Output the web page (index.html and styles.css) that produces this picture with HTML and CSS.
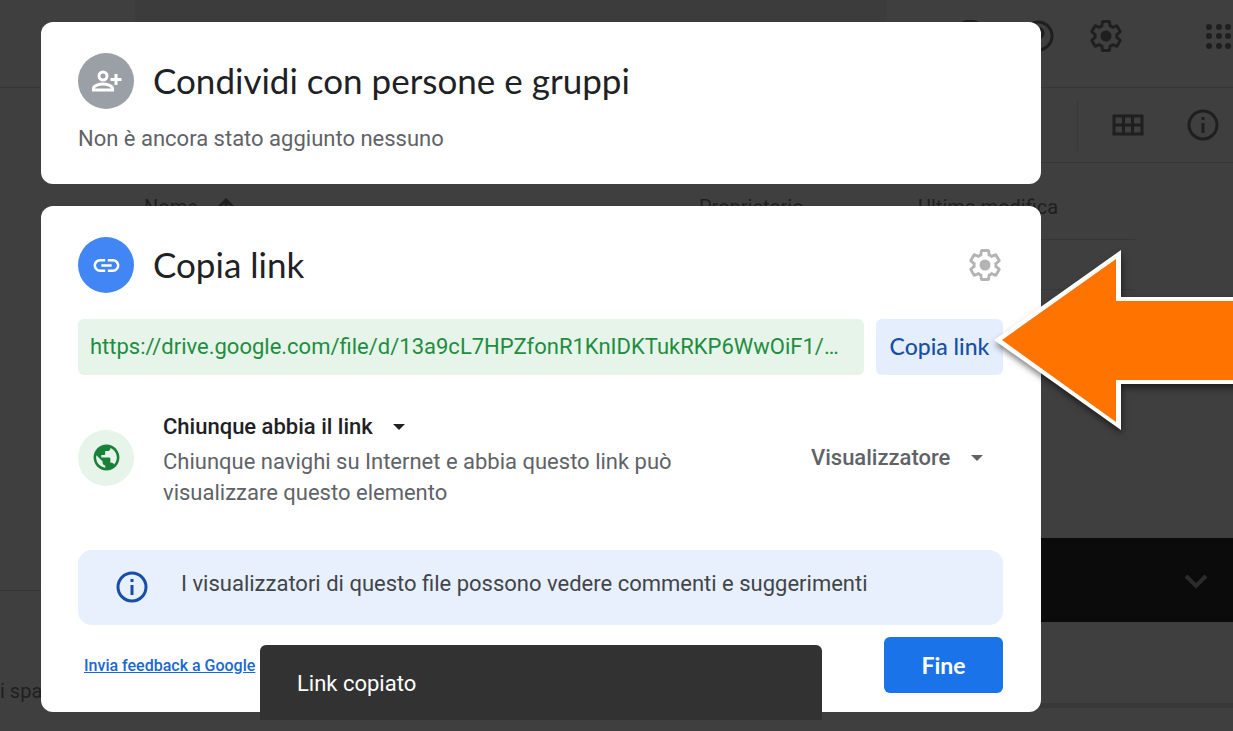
FILE: index.html
```html
<!DOCTYPE html>
<html lang="it">
<head>
    <meta charset="UTF-8">
    <meta name="viewport" content="width=device-width, initial-scale=1">
    <title>Condividi con persone e gruppi</title>
    <link rel="stylesheet" href="styles.css">
</head>
<body>

    <!-- Drive page, dimmed behind the dialog -->
    <div class="drive">
        <header class="topbar">
            <div class="search-box"></div>
            <div class="topbar-icons">
                <svg class="icon" viewBox="0 0 32 32"><circle cx="16" cy="16" r="15" fill="none" stroke="currentColor" stroke-width="3"/></svg>
                <svg class="icon" viewBox="0 0 32 32"><circle cx="16" cy="16" r="14" fill="none" stroke="currentColor" stroke-width="3"/><path d="M11 13a5 5 0 1 1 8 4c-2 1.500-3 2-3 4" fill="none" stroke="currentColor" stroke-width="3"/></svg>
                <svg class="icon" viewBox="1 1 22 22"><use href="#gear"/></svg>
            </div>
            <svg class="icon apps" viewBox="0 0 32 32">
                <g fill="currentColor">
                    <circle cx="6" cy="7" r="3"/><circle cx="16" cy="7" r="3"/><circle cx="25" cy="7" r="3"/>
                    <circle cx="6" cy="16" r="3"/><circle cx="16" cy="16" r="3"/><circle cx="25" cy="16" r="3"/>
                    <circle cx="6" cy="26" r="3"/><circle cx="16" cy="26" r="3"/><circle cx="25" cy="26" r="3"/>
                </g>
            </svg>
        </header>
        <div class="drive-body">
            <aside class="sidebar">
                <p class="storage">i spazio</p>
            </aside>
            <main class="files">
                <div class="toolbar">
                    <span class="divider"></span>
                    <svg class="icon" viewBox="0 0 32 32"><path d="M2 7h28v18H2zM2 16h28M11.500 7v18M20.500 7v18" fill="none" stroke="currentColor" stroke-width="3"/></svg>
                    <svg class="icon" viewBox="0 0 32 32"><use href="#info"/></svg>
                </div>
                <div class="columns">
                    <span class="sort">Nome
                        <svg width="20" height="20" viewBox="0 0 20 20"><path d="M10 20V3M2 11l8-8 8 8" fill="none" stroke="currentColor" stroke-width="3"/></svg>
                    </span>
                    <span>Proprietario</span>
                    <span>Ultima modifica</span>
                </div>
                <div class="file-row"></div>
            </main>
        </div>
        <div class="upload-panel">
            <div class="upload-head">
                <svg width="24" height="16" viewBox="0 0 24 16"><path d="M2 3l10 10L22 3" fill="none" stroke="currentColor" stroke-width="4"/></svg>
            </div>
            <div class="upload-list"></div>
        </div>
    </div>

    <div class="overlay">
        <section class="card">
            <div class="card-header">
                <span class="badge badge-gray">
                    <svg width="56" height="56" viewBox="0 0 56 56" fill="none" stroke="#fff" stroke-width="3">
                        <circle cx="25" cy="23" r="4"/>
                        <path d="M15.500 37v-1.500c0-3 6-4.500 9.500-4.500s9.500 1.500 9.500 4.500V37z"/>
                        <path d="M38 21v11M32.500 26.500h11"/>
                    </svg>
                </span>
                <h1>Condividi con persone e gruppi</h1>
            </div>
            <p class="empty">Non è ancora stato aggiunto nessuno</p>
        </section>

        <section class="card">
            <div class="card-header">
                <span class="badge badge-blue">
                    <svg width="31" height="31" viewBox="0 0 24 24" fill="#fff"><path d="M3.900 12c0-1.710 1.390-3.100 3.100-3.100h4V7H7c-2.760 0-5 2.240-5 5s2.240 5 5 5h4v-1.900H7c-1.710 0-3.100-1.390-3.100-3.100zM8 13h8v-2H8v2zm9-6h-4v1.900h4c1.710 0 3.100 1.390 3.100 3.100s-1.390 3.100-3.100 3.100h-4V17h4c2.760 0 5-2.240 5-5s-2.240-5-5-5z"/></svg>
                </span>
                <h2>Copia link</h2>
                <button class="settings-btn" type="button" aria-label="Impostazioni">
                    <svg class="icon" viewBox="1 1 22 22"><use href="#gear"/></svg>
                </button>
            </div>

            <div class="link-row">
                <input class="link-input" type="text" aria-label="Link" readonly value="https://drive.google.com/file/d/13a9cL7HPZfonR1KnIDKTukRKP6WwOiF1/…">
                <button class="copy-btn" type="button">Copia link</button>
            </div>

            <div class="access">
                <span class="badge badge-green">
                    <svg width="31" height="31" viewBox="0 0 24 24" fill="#188038"><path d="M12 2C6.480 2 2 6.480 2 12s4.480 10 10 10 10-4.480 10-10S17.520 2 12 2zm-1 17.930c-3.950-.49-7-3.850-7-7.930 0-.62.080-1.210.21-1.790L9 15v1c0 1.100.9 2 2 2v1.930zm6.900-2.540c-.26-.81-1-1.390-1.900-1.390h-1v-3c0-.55-.45-1-1-1H8v-2h2c.55 0 1-.45 1-1V7h2c1.100 0 2-.9 2-2v-.41c2.930 1.190 5 4.060 5 7.410 0 2.080-.8 3.970-2.100 5.390z"/></svg>
                </span>
                <div class="access-text">
                    <div class="picker">
                        <select aria-label="Accesso generale">
                            <option>Chiunque abbia il link</option>
                        </select>
                        <svg width="12" height="6" viewBox="0 0 12 6"><path d="M0 0h12L6 6z" fill="currentColor"/></svg>
                    </div>
                    <p>Chiunque navighi su Internet e abbia questo link può visualizzare questo elemento</p>
                </div>
                <div class="picker role">
                    <select aria-label="Ruolo">
                        <option>Visualizzatore</option>
                    </select>
                    <svg width="12" height="6" viewBox="0 0 12 6"><path d="M0 0h12L6 6z" fill="currentColor"/></svg>
                </div>
            </div>

            <div class="notice">
                <svg class="icon" viewBox="0 0 32 32"><use href="#info"/></svg>
                <p>I visualizzatori di questo file possono vedere commenti e suggerimenti</p>
            </div>

            <div class="card-footer">
                <a href="#">Invia feedback a Google</a>
                <button class="done-btn" type="button">Fine</button>
            </div>
        </section>
    </div>

    <div class="toast" role="status">Link copiato</div>

    <svg class="arrow" viewBox="0 0 239 180">
        <path d="M0 90L127 0v47h130v87H127v46z" fill="#fff"/>
        <path d="M8 90L122 9v42h130v79H122v42z" fill="#ff7300"/>
    </svg>

    <!-- shared icons -->
    <svg class="defs">
        <symbol id="gear" overflow="visible">
            <path fill="none" stroke="currentColor" stroke-width="2" d="M19.430 12.980c.04-.32.07-.64.07-.98s-.03-.66-.07-.98l2.110-1.650c.19-.15.24-.42.12-.64l-2-3.460c-.12-.22-.39-.3-.61-.22l-2.490 1c-.52-.4-1.080-.73-1.690-.98l-.38-2.650C14.460 2.180 14.250 2 14 2h-4c-.25 0-.46.18-.49.42l-.38 2.650c-.61.25-1.170.59-1.690.98l-2.490-1c-.23-.09-.49 0-.61.22l-2 3.460c-.13.22-.07.49.12.64l2.110 1.650c-.04.32-.07.65-.07.98s.03.66.07.98l-2.110 1.650c-.19.15-.24.42-.12.64l2 3.460c.12.22.39.3.61.22l2.490-1c.52.4 1.080.73 1.690.98l.38 2.650c.03.24.24.42.49.42h4c.25 0 .46-.18.49-.42l.38-2.650c.61-.25 1.170-.59 1.690-.98l2.490 1c.23.09.49 0 .61-.22l2-3.460c.12-.22.07-.49-.12-.64l-2.110-1.650z"/>
            <circle cx="12" cy="12" r="3.800" fill="currentColor"/>
        </symbol>
        <symbol id="info" overflow="visible">
            <circle cx="16" cy="16" r="14" fill="none" stroke="currentColor" stroke-width="3"/>
            <path d="M16 8v3M16 14v10" fill="none" stroke="currentColor" stroke-width="3"/>
        </symbol>
    </svg>

</body>
</html>
```
FILE: styles.css
```css
* { box-sizing: border-box; }
body { margin: 0; font-family: Roboto, Arial, sans-serif; font-size: 22px; color: #202124; position: relative; overflow: hidden; }
h1, h2, p { margin: 0; }
button, input, select { font: inherit; color: inherit; border: none; margin: 0; }
button { cursor: pointer; }
.icon { width: 32px; height: 32px; flex: none; display: block; }
.defs { position: absolute; width: 0; height: 0; }

/* dimmed page */
.drive { min-height: 100vh; display: flex; flex-direction: column; background: #3f3f3f; color: #1f1f1f; position: relative; overflow: hidden; }
.topbar { display: flex; align-items: center; height: 88px; padding: 0 0 16px 135px; border-bottom: 1px solid #353535; }
.search-box { width: 752px; height: 72px; background: #3c3c3c; }
.topbar-icons { display: flex; gap: 36px; margin: 0 81px 0 auto; }
.apps { margin-right: -2px; }
.drive-body { display: flex; flex: 1; }
.sidebar { width: 135px; display: flex; flex-direction: column; justify-content: flex-end; padding-bottom: 26px; }
.storage { width: 100px; height: 115px; padding-top: 86px; border-top: 1px solid #353535; font-size: 20px; line-height: 28px; }
.files { flex: 1; }
.toolbar { display: flex; align-items: center; justify-content: flex-end; gap: 43px; height: 75px; padding-right: 14px; border-bottom: 1px solid #353535; }
.divider { width: 1px; height: 50px; margin-right: -9px; background: #383838; }
.columns { display: grid; grid-template-columns: 555px 219px 1fr; align-content: start; height: 77px; padding: 30px 0 0 9px; margin-right: 98px; border-bottom: 1px solid #353535; font-size: 20px; line-height: 28px; }
.sort { display: flex; align-items: center; gap: 18px; }
.file-row { height: 50px; margin-right: 98px; border-bottom: 1px solid #383838; }
.upload-panel { position: absolute; right: 0; bottom: 23px; width: 560px; border-bottom: 5px solid #383838; }
.upload-head { display: flex; align-items: center; justify-content: flex-end; height: 84px; padding: 2px 25px 0 0; background: #0b0b0b; color: #2b2b2b; }
.upload-list { height: 81px; background: #3f3f3f; }

/* dialog */
.overlay { position: absolute; top: 0; left: 0; right: 0; display: flex; flex-direction: column; gap: 22px; padding: 22px 192px 19px 41px; }
.card { background: #fff; border-radius: 12px; padding: 31px 38px 19px 37px; }
.card-header { display: flex; align-items: center; gap: 19px; }
.card-header h1, .card-header h2 { font-family: Lato, sans-serif; font-size: 35px; font-weight: 400; line-height: 54px; padding-bottom: 2px; }
.badge { width: 56px; height: 56px; flex: none; border-radius: 50%; display: flex; align-items: center; justify-content: center; }
.badge-gray { background: #9aa0a6; }
.badge-blue { background: #4285f4; }
.badge-green { background: #e6f4ea; }
.empty { margin: 15px 0 11px; line-height: 30px; color: #5f6368; }
.settings-btn { margin-left: auto; padding: 0 2px; background: none; color: #b4b4b4; }

.link-row { display: flex; gap: 12px; margin-top: 26px; }
.link-input { flex: 1; min-width: 0; height: 56px; padding: 0 8px 2px 12px; border-radius: 6px; background: #e6f4ea; color: #1e8e3e; text-overflow: ellipsis; outline: none; }
.copy-btn { height: 56px; min-width: 127px; padding: 0 12px 2px; border-radius: 6px; background: #e4eefc; color: #174ea6; font-family: Lato, sans-serif; font-size: 23px; font-weight: 500; }

.access { display: flex; align-items: center; margin: 32px 0 42px; }
.access-text { flex: 1; max-width: 560px; margin-left: 29px; color: #5f6368; line-height: 31px; }
.picker { display: flex; align-items: center; gap: 20px; height: 39px; font-weight: 500; color: #202124; }
.picker select { appearance: none; padding: 0; background: none; cursor: pointer; }
.role { margin: 0 20px 0 auto; color: #5f6368; }

.notice { display: flex; align-items: center; gap: 33px; min-height: 75px; padding: 0 38px 2px; border-radius: 14px; background: #e8f0fe; color: #174ea6; }
.notice p { color: #414549; line-height: 30px; padding-bottom: 6px; }

.card-footer { display: flex; align-items: center; justify-content: space-between; margin-top: 12px; padding-left: 6px; }
.card-footer a { font-size: 16px; font-weight: 500; color: #1967d2; }
.done-btn { height: 56px; min-width: 119px; border-radius: 6px; background: #1a73e8; color: #fff; font-family: Lato, sans-serif; font-size: 23px; font-weight: 700; }

.toast { position: absolute; left: 260px; top: 645px; width: 562px; padding: 25px 37px 23px; border-radius: 6px 6px 0 0; background: #323232; color: #fff; line-height: 27px; }
.arrow { position: absolute; left: 994px; top: 250px; width: 239px; height: 180px; overflow: visible; filter: drop-shadow(1px 4px 3px rgba(0, 0, 0, .5)); }
```
